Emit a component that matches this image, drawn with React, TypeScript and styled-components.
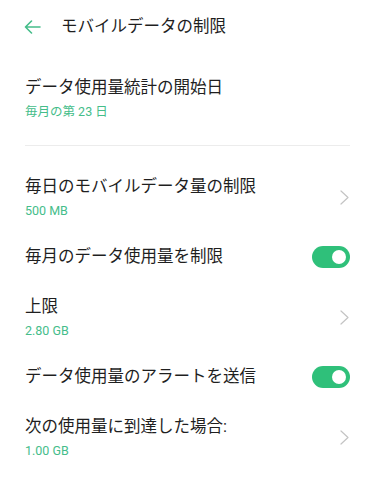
import React from 'react';
import styled, {createGlobalStyle} from "styled-components";

const colors = {
    text: '#1f1f1f',
    green: '#2fc07a',
    subGreen: '#45bd8a',
    divider: '#ececec',
    chevron: '#c4c4c4',
}

const GlobalStyle = createGlobalStyle`
    body {
        margin: 0;
        background: #ffffff;
        font-family: Roboto, "Noto Sans CJK JP", sans-serif;
        color: ${colors.text};
    }
`

type Item = {
    title: string
    value?: string
    kind: 'link' | 'toggle' | 'plain'
}

const topItems: Item[] = [
    {title: 'データ使用量統計の開始日', value: '毎月の第 23 日', kind: 'plain'},
]

const items: Item[] = [
    {title: '毎日のモバイルデータ量の制限', value: '500 MB', kind: 'link'},
    {title: '毎月のデータ使用量を制限', kind: 'toggle'},
    {title: '上限', value: '2.80 GB', kind: 'link'},
    {title: 'データ使用量のアラートを送信', kind: 'toggle'},
    {title: '次の使用量に到達した場合:', value: '1.00 GB', kind: 'link'},
]

const BackArrow = () => (
    <svg width="17" height="14" viewBox="0 0 17 14" fill="none">
        <path d="M16 7H1.5M7.5 1L1.5 7L7.5 13" stroke={colors.subGreen} strokeWidth="1.6"
              strokeLinecap="round" strokeLinejoin="round"/>
    </svg>
)

const Chevron = () => (
    <svg width="9" height="15" viewBox="0 0 9 15" fill="none">
        <path d="M1 1L8 7.5L1 14" stroke={colors.chevron} strokeWidth="1.2"
              strokeLinecap="round" strokeLinejoin="round"/>
    </svg>
)

const SettingRow = ({item}: { item: Item }) => (
    <Row>
        <RowText>
            <RowTitle>{item.title}</RowTitle>
            {item.value && <RowValue>{item.value}</RowValue>}
        </RowText>
        {item.kind === 'link' && <Chevron/>}
        {item.kind === 'toggle' && <Toggle $on><Knob/></Toggle>}
    </Row>
)

export default function App() {
    return (
        <Page>
            <GlobalStyle/>
            <Header>
                <BackArrow/>
                <HeaderTitle>モバイルデータの制限</HeaderTitle>
            </Header>
            <List>
                {topItems.map(item => <SettingRow key={item.title} item={item}/>)}
                <Divider/>
                {items.map(item => <SettingRow key={item.title} item={item}/>)}
            </List>
        </Page>
    );
}

const Page = styled.div`
    width: 375px;
    min-height: 485px;
    background: #fff;
`

const Header = styled.header`
    height: 54px;
    display: flex;
    align-items: center;
    gap: 20px;
    padding: 0 24px;
    box-sizing: border-box;
`

const HeaderTitle = styled.h1`
    margin: 0;
    font-size: 16.5px;
    font-weight: 400;
    line-height: 24px;
    color: ${colors.text};
`

const List = styled.div`
    display: flex;
    flex-direction: column;
    padding: 9px 25px 0;
`

const Row = styled.div`
    display: flex;
    align-items: center;
    justify-content: space-between;
    padding: 13px 0;

    svg {
        margin-right: 1px;
        flex-shrink: 0;
    }
`

const RowText = styled.div`
    display: flex;
    flex-direction: column;
    gap: 4px;
`

const RowTitle = styled.span`
    font-size: 16.5px;
    line-height: 24px;
    font-weight: 400;
`

const RowValue = styled.span`
    font-size: 12.5px;
    line-height: 16px;
    color: ${colors.subGreen};
`

const Divider = styled.hr`
    border: none;
    height: 1px;
    background: ${colors.divider};
    margin: 12px 0 16px;
`

const Toggle = styled.span<{ $on?: boolean }>`
    width: 38px;
    height: 22px;
    border-radius: 11px;
    background: ${p => p.$on ? colors.green : '#d9d9d9'};
    display: flex;
    align-items: center;
    justify-content: ${p => p.$on ? 'flex-end' : 'flex-start'};
    padding: 0 4px;
    box-sizing: border-box;
`

const Knob = styled.span`
    width: 14px;
    height: 14px;
    border-radius: 50%;
    background: #fff;
`
